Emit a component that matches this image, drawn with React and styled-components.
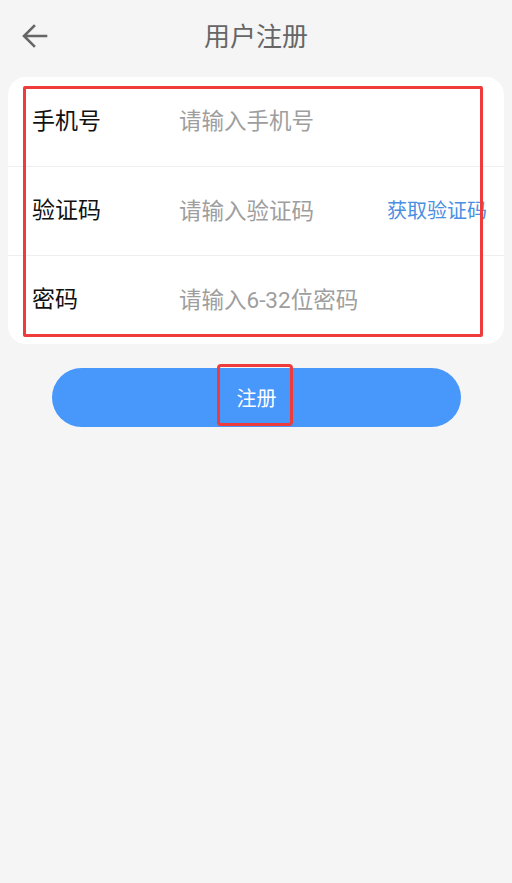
import React from "react";
import styled, { createGlobalStyle } from "styled-components";

const GlobalStyle = createGlobalStyle`
  html, body {
    margin: 0;
    padding: 0;
    background: #f5f5f5;
  }
  body {
    font-family: Roboto, "Noto Sans CJK SC", sans-serif;
  }
`;

const Page = styled.div`
  width: 512px;
  min-height: 883px;
  background: #f5f5f5;
  display: flex;
  flex-direction: column;
`;

const Header = styled.div`
  height: 73px;
  display: flex;
  align-items: center;
  justify-content: center;
  position: relative;
`;

const BackButton = styled.div`
  position: absolute;
  left: 21px;
  top: 22px;
  width: 28px;
  height: 28px;
  display: flex;
  align-items: center;
  justify-content: center;
`;

const Title = styled.h1`
  margin: 0;
  font-size: 26px;
  font-weight: 400;
  color: #666666;
  line-height: 1;
`;

const CardWrap = styled.div`
  position: relative;
  margin: 4px 8px 0;
`;

const Card = styled.div`
  background: #ffffff;
  border-radius: 18px;
  overflow: hidden;
`;

const Row = styled.div`
  height: 89px;
  display: flex;
  align-items: center;
  padding: 0 17px 0 24px;
  border-top: ${(p) => (p.$first ? "none" : "1px solid #eeeeee")};
  box-sizing: border-box;
`;

const Label = styled.span`
  width: 147px;
  flex: none;
  font-size: 23px;
  line-height: 1.2;
  color: #111111;
`;

const Input = styled.input`
  flex: 1;
  min-width: 0;
  border: none;
  outline: none;
  background: transparent;
  padding: 0;
  font-family: inherit;
  font-size: 22.5px;
  line-height: 1.2;
  color: #333333;
  &::placeholder {
    color: #9e9e9e;
  }
`;

const CodeLink = styled.span`
  flex: none;
  font-size: 20px;
  line-height: 1.2;
  color: #4a90e2;
`;

const Annotation = styled.div`
  position: absolute;
  left: ${(p) => p.$left}px;
  top: ${(p) => p.$top}px;
  width: ${(p) => p.$width}px;
  height: ${(p) => p.$height}px;
  border: 3px solid #ee3b3b;
  border-radius: ${(p) => p.$radius || 2}px;
  box-sizing: border-box;
  pointer-events: none;
`;

const ButtonWrap = styled.div`
  position: relative;
  margin: 24px 0 0 52px;
  width: 409px;
`;

const SubmitButton = styled.button`
  width: 100%;
  height: 59px;
  border: none;
  border-radius: 30px;
  background: #4897fb;
  color: #ffffff;
  font-family: inherit;
  font-size: 20px;
  display: flex;
  align-items: center;
  justify-content: center;
  padding: 0;
`;

const fields = [
  { label: "手机号", placeholder: "请输入手机号" },
  { label: "验证码", placeholder: "请输入验证码", code: true },
  { label: "密码", placeholder: "请输入6-32位密码", type: "password" },
];

export default function App() {
  return (
    <Page>
      <GlobalStyle />
      <Header>
        <BackButton>
          <svg width="26" height="24" viewBox="0 0 26 24" fill="none">
            <path
              d="M24 12H3M12 2L2 12l10 10"
              stroke="#666666"
              strokeWidth="2.6"
              strokeLinecap="square"
            />
          </svg>
        </BackButton>
        <Title>用户注册</Title>
      </Header>
      <CardWrap>
        <Card>
          {fields.map((f, i) => (
            <Row key={f.label} $first={i === 0}>
              <Label>{f.label}</Label>
              <Input type={f.type || "text"} placeholder={f.placeholder} />
              {f.code && <CodeLink>获取验证码</CodeLink>}
            </Row>
          ))}
        </Card>
        <Annotation $left={15} $top={9} $width={460} $height={251} />
      </CardWrap>
      <ButtonWrap>
        <SubmitButton>注册</SubmitButton>
        <Annotation $left={165} $top={-4} $width={76} $height={62} $radius={4} />
      </ButtonWrap>
    </Page>
  );
}
